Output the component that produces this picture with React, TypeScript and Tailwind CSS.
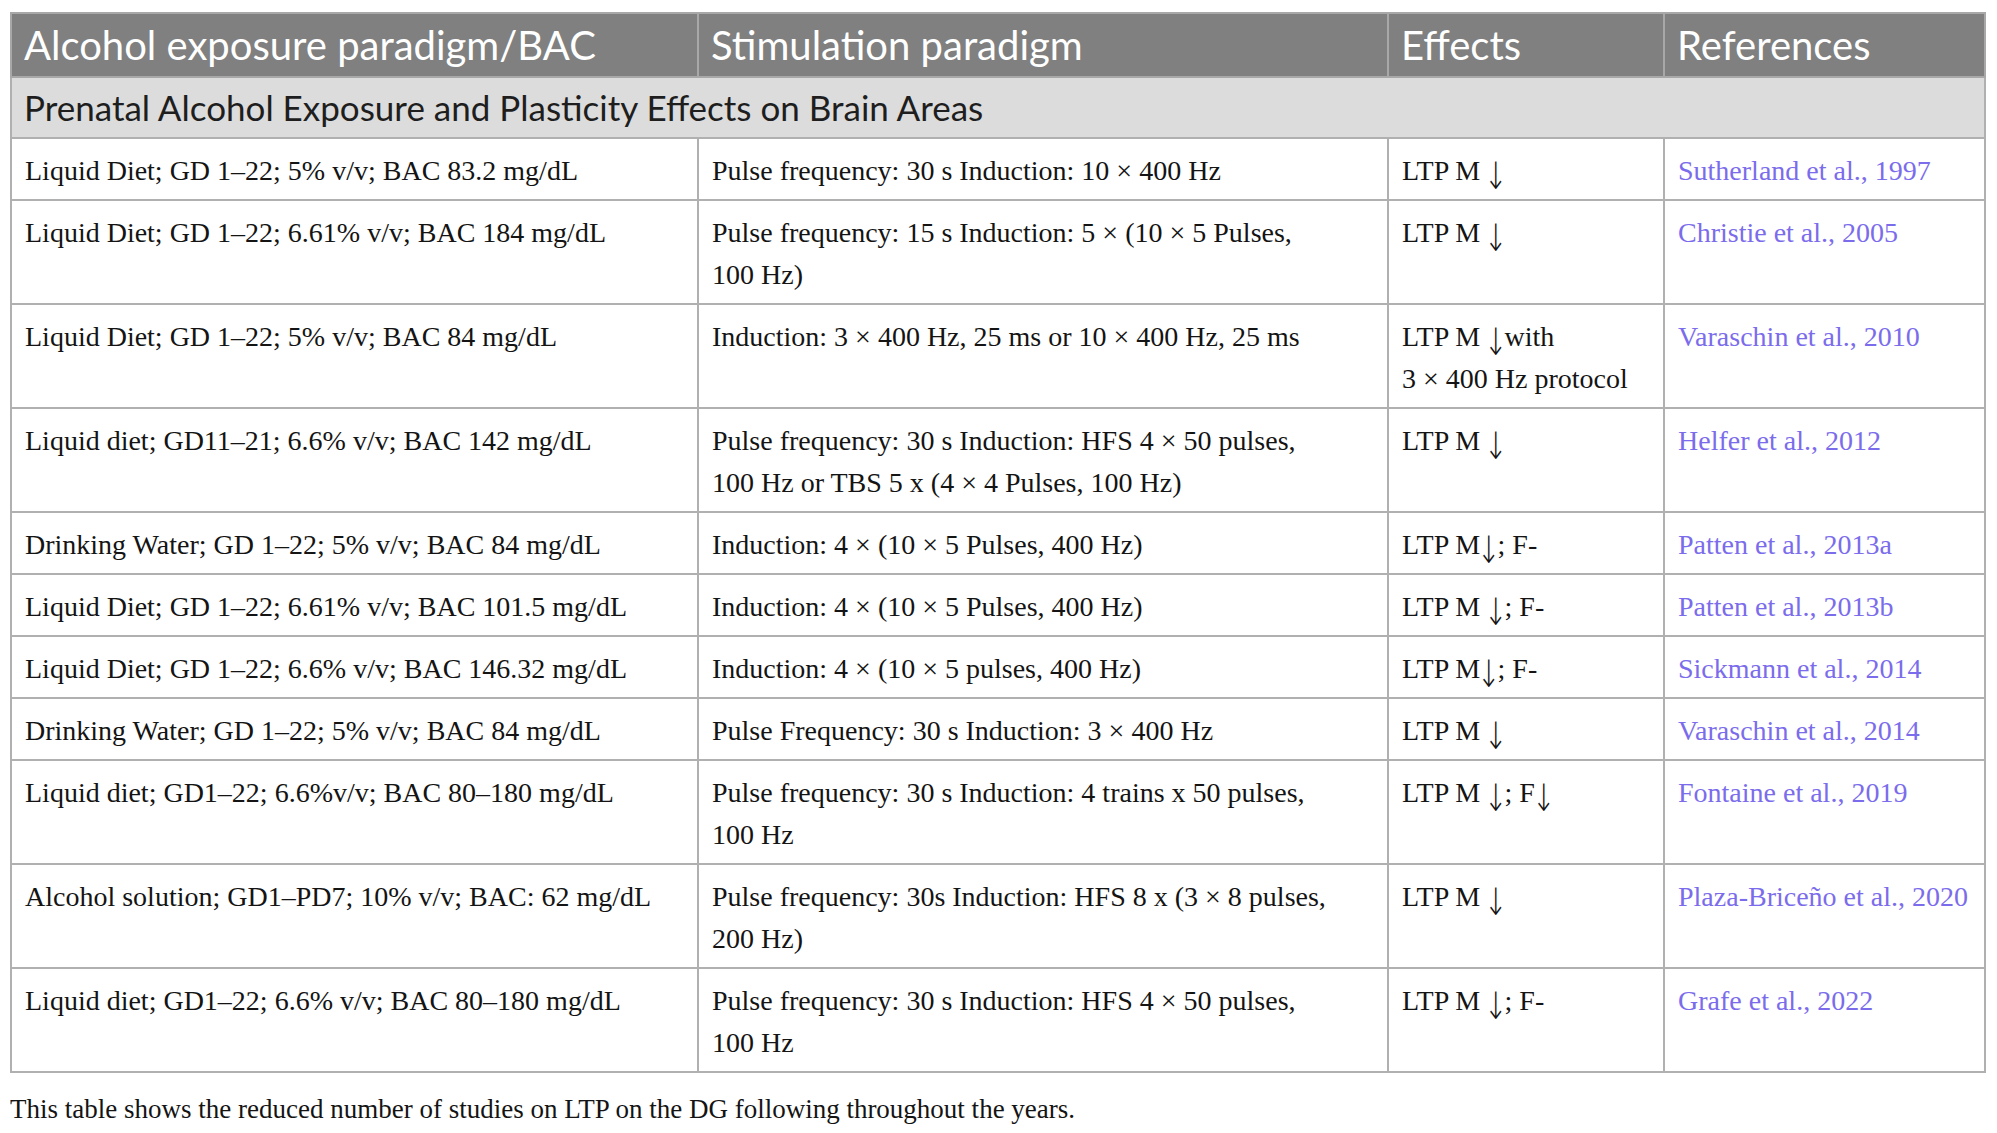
import React from "react";

type Row = { exposure: string; stim: string[]; effects: string[]; ref: string };

const rows: Row[] = [
  { exposure: "Liquid Diet; GD 1–22; 5% v/v; BAC 83.2 mg/dL", stim: ["Pulse frequency: 30 s Induction: 10 × 400 Hz"], effects: ["LTP M ↓"], ref: "Sutherland et al., 1997" },
  { exposure: "Liquid Diet; GD 1–22; 6.61% v/v; BAC 184 mg/dL", stim: ["Pulse frequency: 15 s Induction: 5 × (10 × 5 Pulses,", "100 Hz)"], effects: ["LTP M ↓"], ref: "Christie et al., 2005" },
  { exposure: "Liquid Diet; GD 1–22; 5% v/v; BAC 84 mg/dL", stim: ["Induction: 3 × 400 Hz, 25 ms or 10 × 400 Hz, 25 ms"], effects: ["LTP M ↓with", "3 × 400 Hz protocol"], ref: "Varaschin et al., 2010" },
  { exposure: "Liquid diet; GD11–21; 6.6% v/v; BAC 142 mg/dL", stim: ["Pulse frequency: 30 s Induction: HFS 4 × 50 pulses,", "100 Hz or TBS 5 x (4 × 4 Pulses, 100 Hz)"], effects: ["LTP M ↓"], ref: "Helfer et al., 2012" },
  { exposure: "Drinking Water; GD 1–22; 5% v/v; BAC 84 mg/dL", stim: ["Induction: 4 × (10 × 5 Pulses, 400 Hz)"], effects: ["LTP M↓; F-"], ref: "Patten et al., 2013a" },
  { exposure: "Liquid Diet; GD 1–22; 6.61% v/v; BAC 101.5 mg/dL", stim: ["Induction: 4 × (10 × 5 Pulses, 400 Hz)"], effects: ["LTP M ↓; F-"], ref: "Patten et al., 2013b" },
  { exposure: "Liquid Diet; GD 1–22; 6.6% v/v; BAC 146.32 mg/dL", stim: ["Induction: 4 × (10 × 5 pulses, 400 Hz)"], effects: ["LTP M↓; F-"], ref: "Sickmann et al., 2014" },
  { exposure: "Drinking Water; GD 1–22; 5% v/v; BAC 84 mg/dL", stim: ["Pulse Frequency: 30 s Induction: 3 × 400 Hz"], effects: ["LTP M ↓"], ref: "Varaschin et al., 2014" },
  { exposure: "Liquid diet; GD1–22; 6.6%v/v; BAC 80–180 mg/dL", stim: ["Pulse frequency: 30 s Induction: 4 trains x 50 pulses,", "100 Hz"], effects: ["LTP M ↓; F↓"], ref: "Fontaine et al., 2019" },
  { exposure: "Alcohol solution; GD1–PD7; 10% v/v; BAC: 62 mg/dL", stim: ["Pulse frequency: 30s Induction: HFS 8 x (3 × 8 pulses,", "200 Hz)"], effects: ["LTP M ↓"], ref: "Plaza-Briceño et al., 2020" },
  { exposure: "Liquid diet; GD1–22; 6.6% v/v; BAC 80–180 mg/dL", stim: ["Pulse frequency: 30 s Induction: HFS 4 × 50 pulses,", "100 Hz"], effects: ["LTP M ↓; F-"], ref: "Grafe et al., 2022" },
];

const serif = "font-['Liberation_Serif','Times_New_Roman',serif]";
const sans = "font-['Lato','Open_Sans',sans-serif]";
const cell = "border-2 border-[#b0b0b0] align-top pl-[13px] pr-2 pt-[11px] pb-[7px] leading-[42px]";

// tall thin down arrow like the journal typeface
function Effect({ text }: { text: string }) {
  const parts = text.split("↓");
  return (
    <div>
      {parts.map((p, i) => (
        <React.Fragment key={i}>
          {p}
          {i < parts.length - 1 && (
            <span className="inline-block -mx-[3px] font-['DejaVu_Sans',sans-serif] font-extralight text-[#141414] scale-y-[1.35] origin-top translate-y-[-2px]">
              ↓
            </span>
          )}
        </React.Fragment>
      ))}
    </div>
  );
}

export default function App() {
  return (
    <div className="bg-white w-[1997px] h-[1133px] pt-[12px] pl-[10px]">
      <table className="w-[1974px] border-collapse border-2 border-[#a8a8a8] table-fixed">
        <colgroup>
          <col className="w-[687px]" />
          <col className="w-[690px]" />
          <col className="w-[276px]" />
          <col className="w-[321px]" />
        </colgroup>
        <thead>
          <tr className={`bg-[#808080] text-white ${sans} text-[40px]`}>
            {["Alcohol exposure paradigm/BAC", "Stimulation paradigm", "Effects", "References"].map((h) => (
              <th key={h} className="border-2 border-[#a8a8a8] text-left font-normal pl-[12px] h-[64px] leading-[44px]">
                {h}
              </th>
            ))}
          </tr>
        </thead>
        <tbody className={`${serif} text-[28px] text-[#141414]`}>
          <tr className="bg-[#dcdcdc]">
            <td colSpan={4} className={`border-2 border-[#b0b0b0] pl-[12px] h-[61px] ${sans} text-[35px] text-[#1e1e1e]`}>
              Prenatal Alcohol Exposure and Plasticity Effects on Brain Areas
            </td>
          </tr>
          {rows.map((r) => (
            <tr key={r.ref}>
              <td className={cell}>{r.exposure}</td>
              <td className={cell}>
                {r.stim.map((s) => (
                  <div key={s}>{s}</div>
                ))}
              </td>
              <td className={cell}>
                {r.effects.map((s) => (
                  <Effect key={s} text={s} />
                ))}
              </td>
              <td className={`${cell} text-[#7b6cec]`}>{r.ref}</td>
            </tr>
          ))}
        </tbody>
      </table>
      <p className={`${serif} text-[27px] text-[#141414] mt-[20px] leading-[32px]`}>
        This table shows the reduced number of studies on LTP on the DG following throughout the years.
      </p>
    </div>
  );
}
